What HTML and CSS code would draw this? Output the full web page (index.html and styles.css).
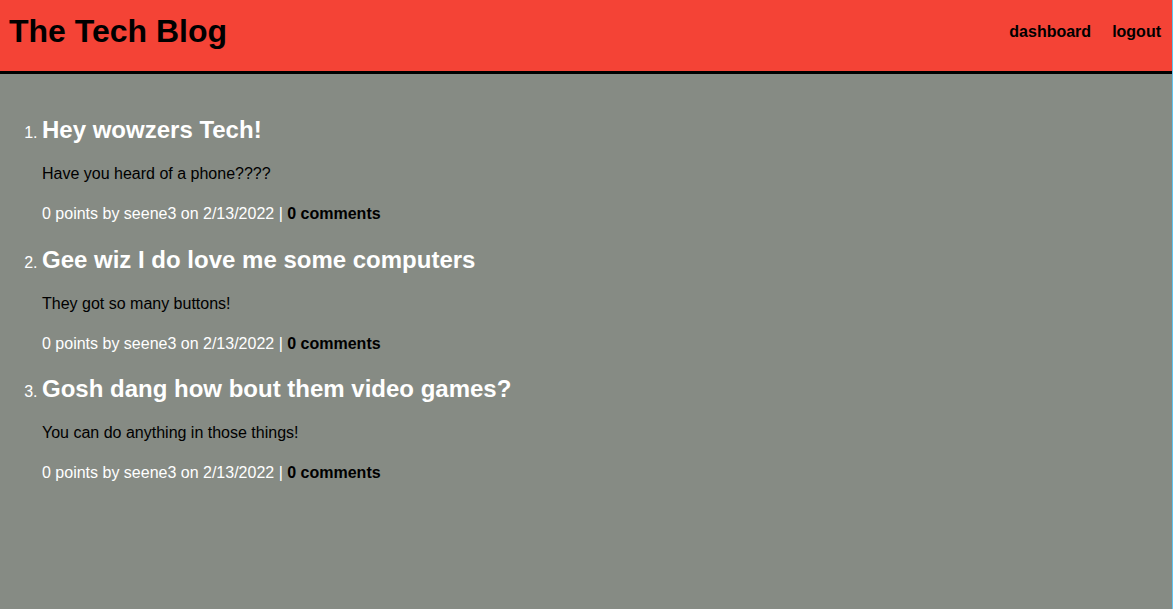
FILE: index.html
```html
<!DOCTYPE html>
<html lang="en">
<head>
<meta charset="utf-8">
<title>The Tech Blog</title>
<link rel="stylesheet" href="styles.css">
</head>
<body>
<header class="site-header">
  <h1 class="site-title">The Tech Blog</h1>
  <nav class="site-nav">
    <a href="#" class="nav-link">dashboard</a>
    <a href="#" class="nav-link">logout</a>
  </nav>
</header>
<main class="content">
  <ol class="post-list">
    <li class="post">
      <h2 class="post-title">Hey wowzers Tech!</h2>
      <p class="post-body">Have you heard of a phone????</p>
      <p class="post-meta">0 points by seene3 on 2/13/2022 | <a href="#" class="comments">0 comments</a></p>
    </li>
    <li class="post">
      <h2 class="post-title">Gee wiz I do love me some computers</h2>
      <p class="post-body">They got so many buttons!</p>
      <p class="post-meta">0 points by seene3 on 2/13/2022 | <a href="#" class="comments">0 comments</a></p>
    </li>
    <li class="post">
      <h2 class="post-title">Gosh dang how bout them video games?</h2>
      <p class="post-body">You can do anything in those things!</p>
      <p class="post-meta">0 points by seene3 on 2/13/2022 | <a href="#" class="comments">0 comments</a></p>
    </li>
  </ol>
</main>
</body>
</html>
```

FILE: styles.css
```css
html {
  background: #868b84;
}
body {
  margin: 0;
  min-height: 609px;
  box-sizing: border-box;
  border-right: 1px solid #62c4ee;
  font-family: "Liberation Sans", Arial, sans-serif;
  background: #868b84;
}
.site-header {
  height: 71px;
  box-sizing: content-box;
  background: #f44336;
  border-bottom: 3px solid #000;
  display: flex;
  align-items: center;
  justify-content: space-between;
  padding: 0 11px 0 9px;
}
.site-title {
  margin: 0 0 8px;
  font-size: 32px;
  font-weight: bold;
  color: #000;
  line-height: 37px;
}
.site-nav {
  display: flex;
  gap: 21px;
  margin-bottom: 8px;
}
.nav-link {
  color: #000;
  font-weight: bold;
  font-size: 16px;
  text-decoration: none;
}
.content {
  padding-top: 42px;
}
.post-list {
  margin: 0;
  padding-left: 42px;
  color: #fff;
  font-size: 16px;
}
.post {
  margin-bottom: 22.5px;
}
.post-title {
  margin: 0 0 21px;
  font-size: 24px;
  line-height: 28px;
  color: #fff;
}
.post-body {
  margin: 0 0 22px;
  line-height: 18px;
  color: #000;
}
.post-meta {
  margin: 0;
  line-height: 18px;
  color: #fff;
}
.comments {
  color: #000;
  font-weight: bold;
  text-decoration: none;
}
```
